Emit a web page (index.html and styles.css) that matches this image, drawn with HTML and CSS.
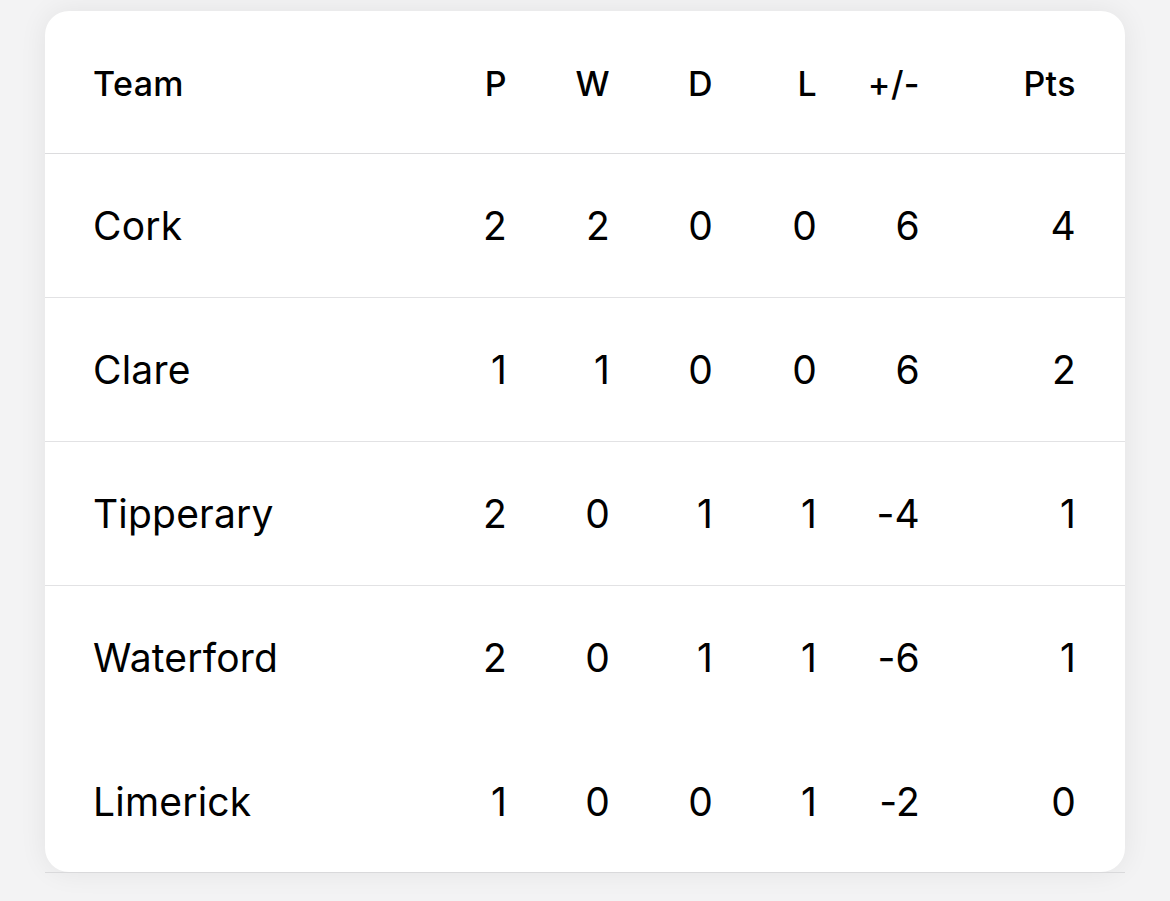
FILE: index.html
```html
<!DOCTYPE html>
<html lang="en">
<head>
<meta charset="utf-8">
<title>Standings</title>
<link rel="stylesheet" href="styles.css">
</head>
<body>
<div class="page">
  <div class="card">
    <div class="row head">
      <div class="team">Team</div>
      <div class="num">P</div>
      <div class="num">W</div>
      <div class="num">D</div>
      <div class="num">L</div>
      <div class="num">+/-</div>
      <div class="num">Pts</div>
    </div>
    <div class="row">
      <div class="team">Cork</div>
      <div class="num">2</div><div class="num">2</div><div class="num">0</div><div class="num">0</div><div class="num">6</div><div class="num">4</div>
    </div>
    <div class="row">
      <div class="team">Clare</div>
      <div class="num">1</div><div class="num">1</div><div class="num">0</div><div class="num">0</div><div class="num">6</div><div class="num">2</div>
    </div>
    <div class="row">
      <div class="team">Tipperary</div>
      <div class="num">2</div><div class="num">0</div><div class="num">1</div><div class="num">1</div><div class="num">-4</div><div class="num">1</div>
    </div>
    <div class="row no-rule">
      <div class="team">Waterford</div>
      <div class="num">2</div><div class="num">0</div><div class="num">1</div><div class="num">1</div><div class="num">-6</div><div class="num">1</div>
    </div>
    <div class="row last">
      <div class="team">Limerick</div>
      <div class="num">1</div><div class="num">0</div><div class="num">0</div><div class="num">1</div><div class="num">-2</div><div class="num">0</div>
    </div>
  </div>
  <div class="under-rule"></div>
</div>
</body>
</html>
```
FILE: styles.css
```css
html, body {
  margin: 0;
  padding: 0;
  background: #f3f3f4;
}
body {
  font-family: Inter, "Noto Sans", "Liberation Sans", sans-serif;
  color: #000;
}
.page {
  padding: 11px 45px 0 45px;
  height: 890px;
}
.card {
  background: #fff;
  border-radius: 24px;
  box-shadow: 0 0 28px rgba(0, 0, 0, 0.07);
  overflow: hidden;
}
.row {
  display: grid;
  grid-template-columns: 1fr 103px 103px 103px 104px 103px 156px;
  align-items: center;
  height: 144px;
  box-sizing: border-box;
  padding: 0 49px 0 48px;
  border-bottom: 1px solid #e2e2e4;
  font-size: 39px;
  font-weight: 400;
  letter-spacing: 0.2px;
}
.row.head {
  height: 143px;
  font-size: 34px;
  font-weight: 500;
  letter-spacing: 0.4px;
  padding-top: 3px;
  border-bottom-color: #dcdcde;
}
.row.no-rule {
  border-bottom-color: #fff;
}
.row.last {
  border-bottom: none;
  height: 142px;
}
.team {
  text-align: left;
}
.num {
  text-align: right;
}
.under-rule {
  height: 1px;
  background: #d9d9db;
}
```
